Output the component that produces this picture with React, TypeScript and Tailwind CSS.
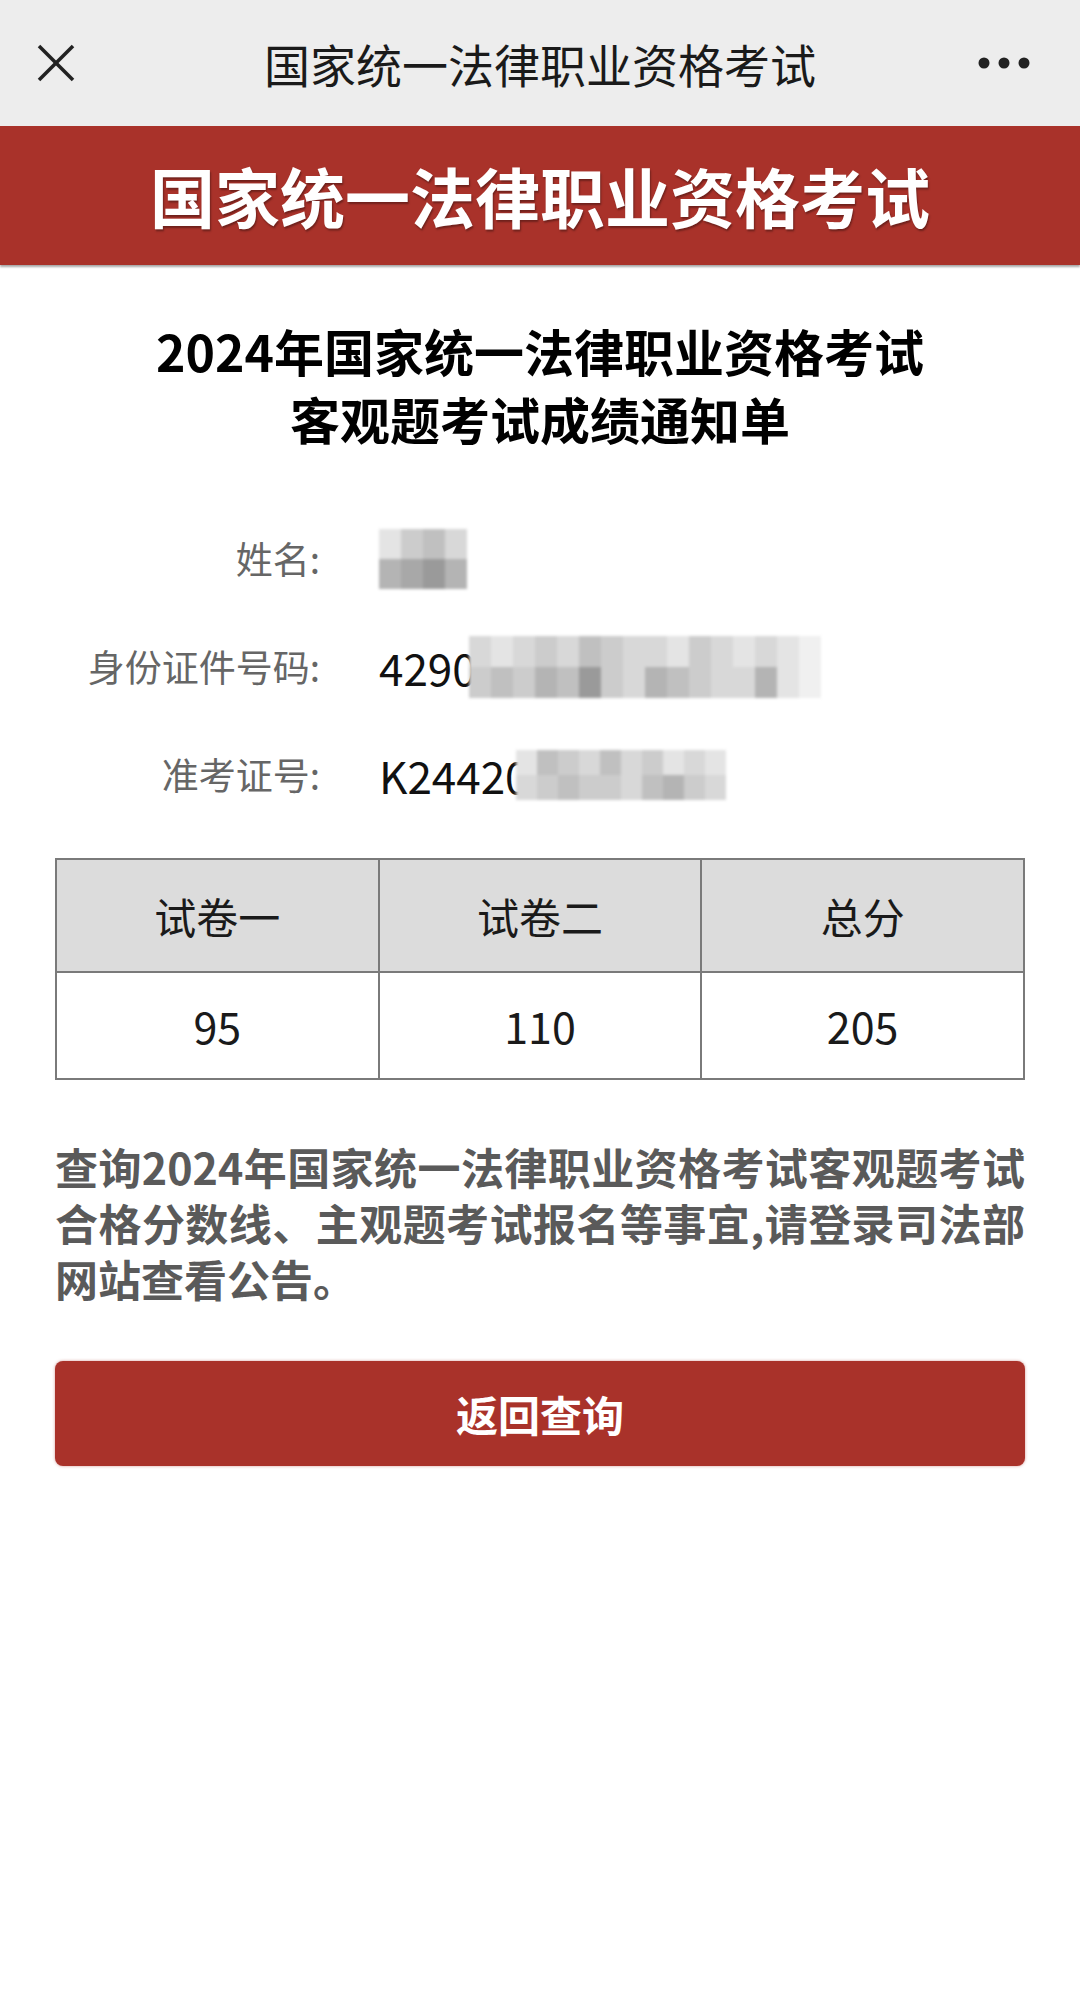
const shade: Record<string, string> = {
  a: "bg-[#f0f0f0]",
  b: "bg-[#e4e4e4]",
  c: "bg-[#d8d8d8]",
  d: "bg-[#cccccc]",
  e: "bg-[#c0c0c0]",
  f: "bg-[#b4b4b4]",
  h: "bg-[#a8a8a8]",
  i: "bg-[#9a9a9a]",
};

// pixelated block that hides personal data
const Mosaic = ({ rows, cell }: { rows: string[]; cell: string }) => {
  return (
    <div className="flex flex-col blur-[1.5px]">
      {rows.map((row, r) => (
        <div key={r} className="flex">
          {row.split("").map((k, i) => (
            <div key={i} className={`${cell} ${shade[k]}`} />
          ))}
        </div>
      ))}
    </div>
  );
};

const InfoRow = ({ label, children }: { label: string; children: React.ReactNode }) => {
  return (
    <div className="flex items-center h-[108px]">
      <div className="w-[320px] text-right text-[37px] text-[#666]">{label}</div>
      <div className="ml-[59px] flex items-center text-[44px] text-[#111]">{children}</div>
    </div>
  );
};

const App = () => {
  return (
    <div className="min-h-[1993px] bg-white font-['Noto_Sans_CJK_SC',sans-serif]">
      <div className="grid grid-cols-[1fr_auto_1fr] items-center h-[126px] bg-[#ededed]">
        <div className="pl-[36px]">
          <svg width="40" height="38" viewBox="0 0 40 38">
            <line x1="3" y1="2" x2="37" y2="36" stroke="#222" strokeWidth="3.5" />
            <line x1="37" y1="2" x2="3" y2="36" stroke="#222" strokeWidth="3.5" />
          </svg>
        </div>
        <div className="text-[46px] text-[#1a1a1a]">国家统一法律职业资格考试</div>
        <div className="flex justify-end pr-[50px]">
          <svg width="52" height="12" viewBox="0 0 52 12">
            <circle cx="6" cy="6" r="5.5" fill="#222" />
            <circle cx="26" cy="6" r="5.5" fill="#222" />
            <circle cx="46" cy="6" r="5.5" fill="#222" />
          </svg>
        </div>
      </div>

      <div className="h-[139px] bg-[#a9322a] flex items-center justify-center shadow-[0_2px_2px_rgba(0,0,0,0.35)]">
        <h1 className="text-[65px] font-bold text-white leading-none [text-shadow:1px_2px_2px_rgba(0,0,0,0.35)]">
          国家统一法律职业资格考试
        </h1>
      </div>

      <div className="px-[55px]">
        <h2 className="mt-[51px] text-center text-[50px] font-bold leading-[68px] text-black">
          2024年国家统一法律职业资格考试
          <br />
          客观题考试成绩通知单
        </h2>

        <div className="mt-[53px] -ml-[55px]">
          <InfoRow label="姓名:">
            <Mosaic cell="w-[22px] h-[30px]" rows={["bdec", "fhif"]} />
          </InfoRow>
          <InfoRow label="身份证件号码:">
            <span>4290</span>
            <div className="-ml-[8px]">
              <Mosaic
                cell="w-[22px] h-[31px]"
                rows={["cbcdcedccbdcbcba", "dedfeidcfedccfba"]}
              />
            </div>
          </InfoRow>
          <InfoRow label="准考证号:">
            <span>K24420</span>
            <div className="-ml-[14px]">
              <Mosaic cell="w-[21px] h-[25px]" rows={["bedcecdbcb", "cdeddcefdc"]} />
            </div>
          </InfoRow>
        </div>

        <table className="mt-[29px] w-full border-collapse text-[42px] text-[#1a1a1a]">
          <thead>
            <tr className="h-[113px] bg-[#dcdcdc]">
              <th className="w-1/3 border-2 border-[#7a7a7a] font-normal">试卷一</th>
              <th className="w-1/3 border-2 border-[#7a7a7a] font-normal">试卷二</th>
              <th className="w-1/3 border-2 border-[#7a7a7a] font-normal">总分</th>
            </tr>
          </thead>
          <tbody>
            <tr className="h-[107px] text-center text-[43px]">
              <td className="border-2 border-[#7a7a7a]">95</td>
              <td className="border-2 border-[#7a7a7a]">110</td>
              <td className="border-2 border-[#7a7a7a]">205</td>
            </tr>
          </tbody>
        </table>

        <p className="mt-[58px] text-[43px] font-bold leading-[56px] text-[#5a5a5a] text-justify">
          查询2024年国家统一法律职业资格考试客观题考试合格分数线、主观题考试报名等事宜,请登录司法部网站查看公告。
        </p>

        <button className="mt-[55px] w-full h-[105px] rounded-[8px] bg-[#a9322a] text-white text-[42px] font-bold shadow-[0_0_3px_rgba(169,50,42,0.5)]">
          返回查询
        </button>
      </div>
    </div>
  );
};

export default App;
